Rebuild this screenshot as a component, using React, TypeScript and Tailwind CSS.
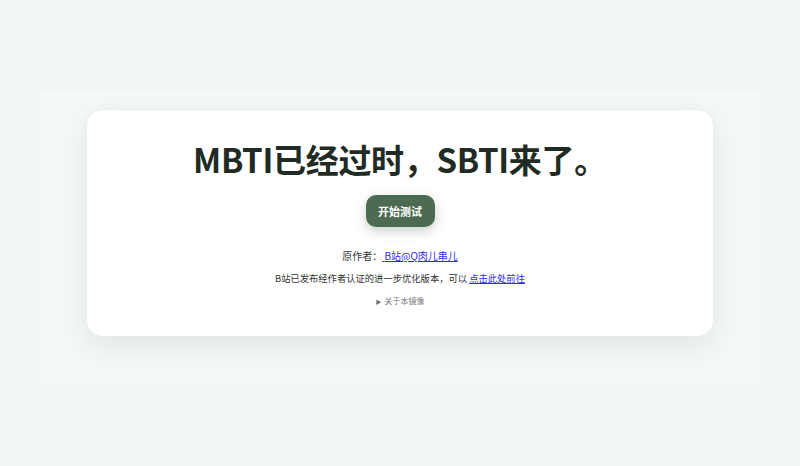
import React from "react";

export default function App() {
  return (
    <div
      className="min-h-screen w-full bg-[#f2f6f3] pt-[90px]"
      style={{ fontFamily: '"Noto Sans CJK SC", "Noto Sans", sans-serif' }}
    >
      <div className="mx-auto w-[718px] bg-[#f4f9f5] pt-[19px] pb-[47px]">
        <div className="mx-auto flex w-[628px] flex-col items-center rounded-[16px] border border-[#e6ece7] bg-white pt-[29px] pb-[28px] shadow-[0_10px_28px_rgba(40,60,45,0.09)]">
          <h1 className="text-[33px] font-bold leading-[40px] tracking-[-0.3px] text-[#1f2b23]">
            MBTI已经过时，SBTI来了。
          </h1>
          <button className="mt-[16px] h-[32px] w-[69px] rounded-[10px] bg-[#4d6a52] text-[11px] font-bold text-white shadow-[0_4px_12px_rgba(40,70,50,0.25)]">
            开始测试
          </button>
          <p className="mt-[21px] text-[10px] leading-[16px] text-[#333]">
            原作者：
            <a href="#" className="text-[#2b2bf0] underline">
              {"\u00a0"}B站@Q肉儿串儿
            </a>
          </p>
          <p className="mt-[7px] text-[9.3px] leading-[14px] text-[#333]">
            B站已发布经作者认证的进一步优化版本，可以{" "}
            <a href="#" className="text-[#2b2bf0] underline">
              点击此处前往
            </a>
          </p>
          <p className="mt-[10px] text-[8px] leading-[12px] text-[#777]">
            <span className="mr-[3px] text-[6px]">▶</span>关于本镜像
          </p>
        </div>
      </div>
    </div>
  );
}
